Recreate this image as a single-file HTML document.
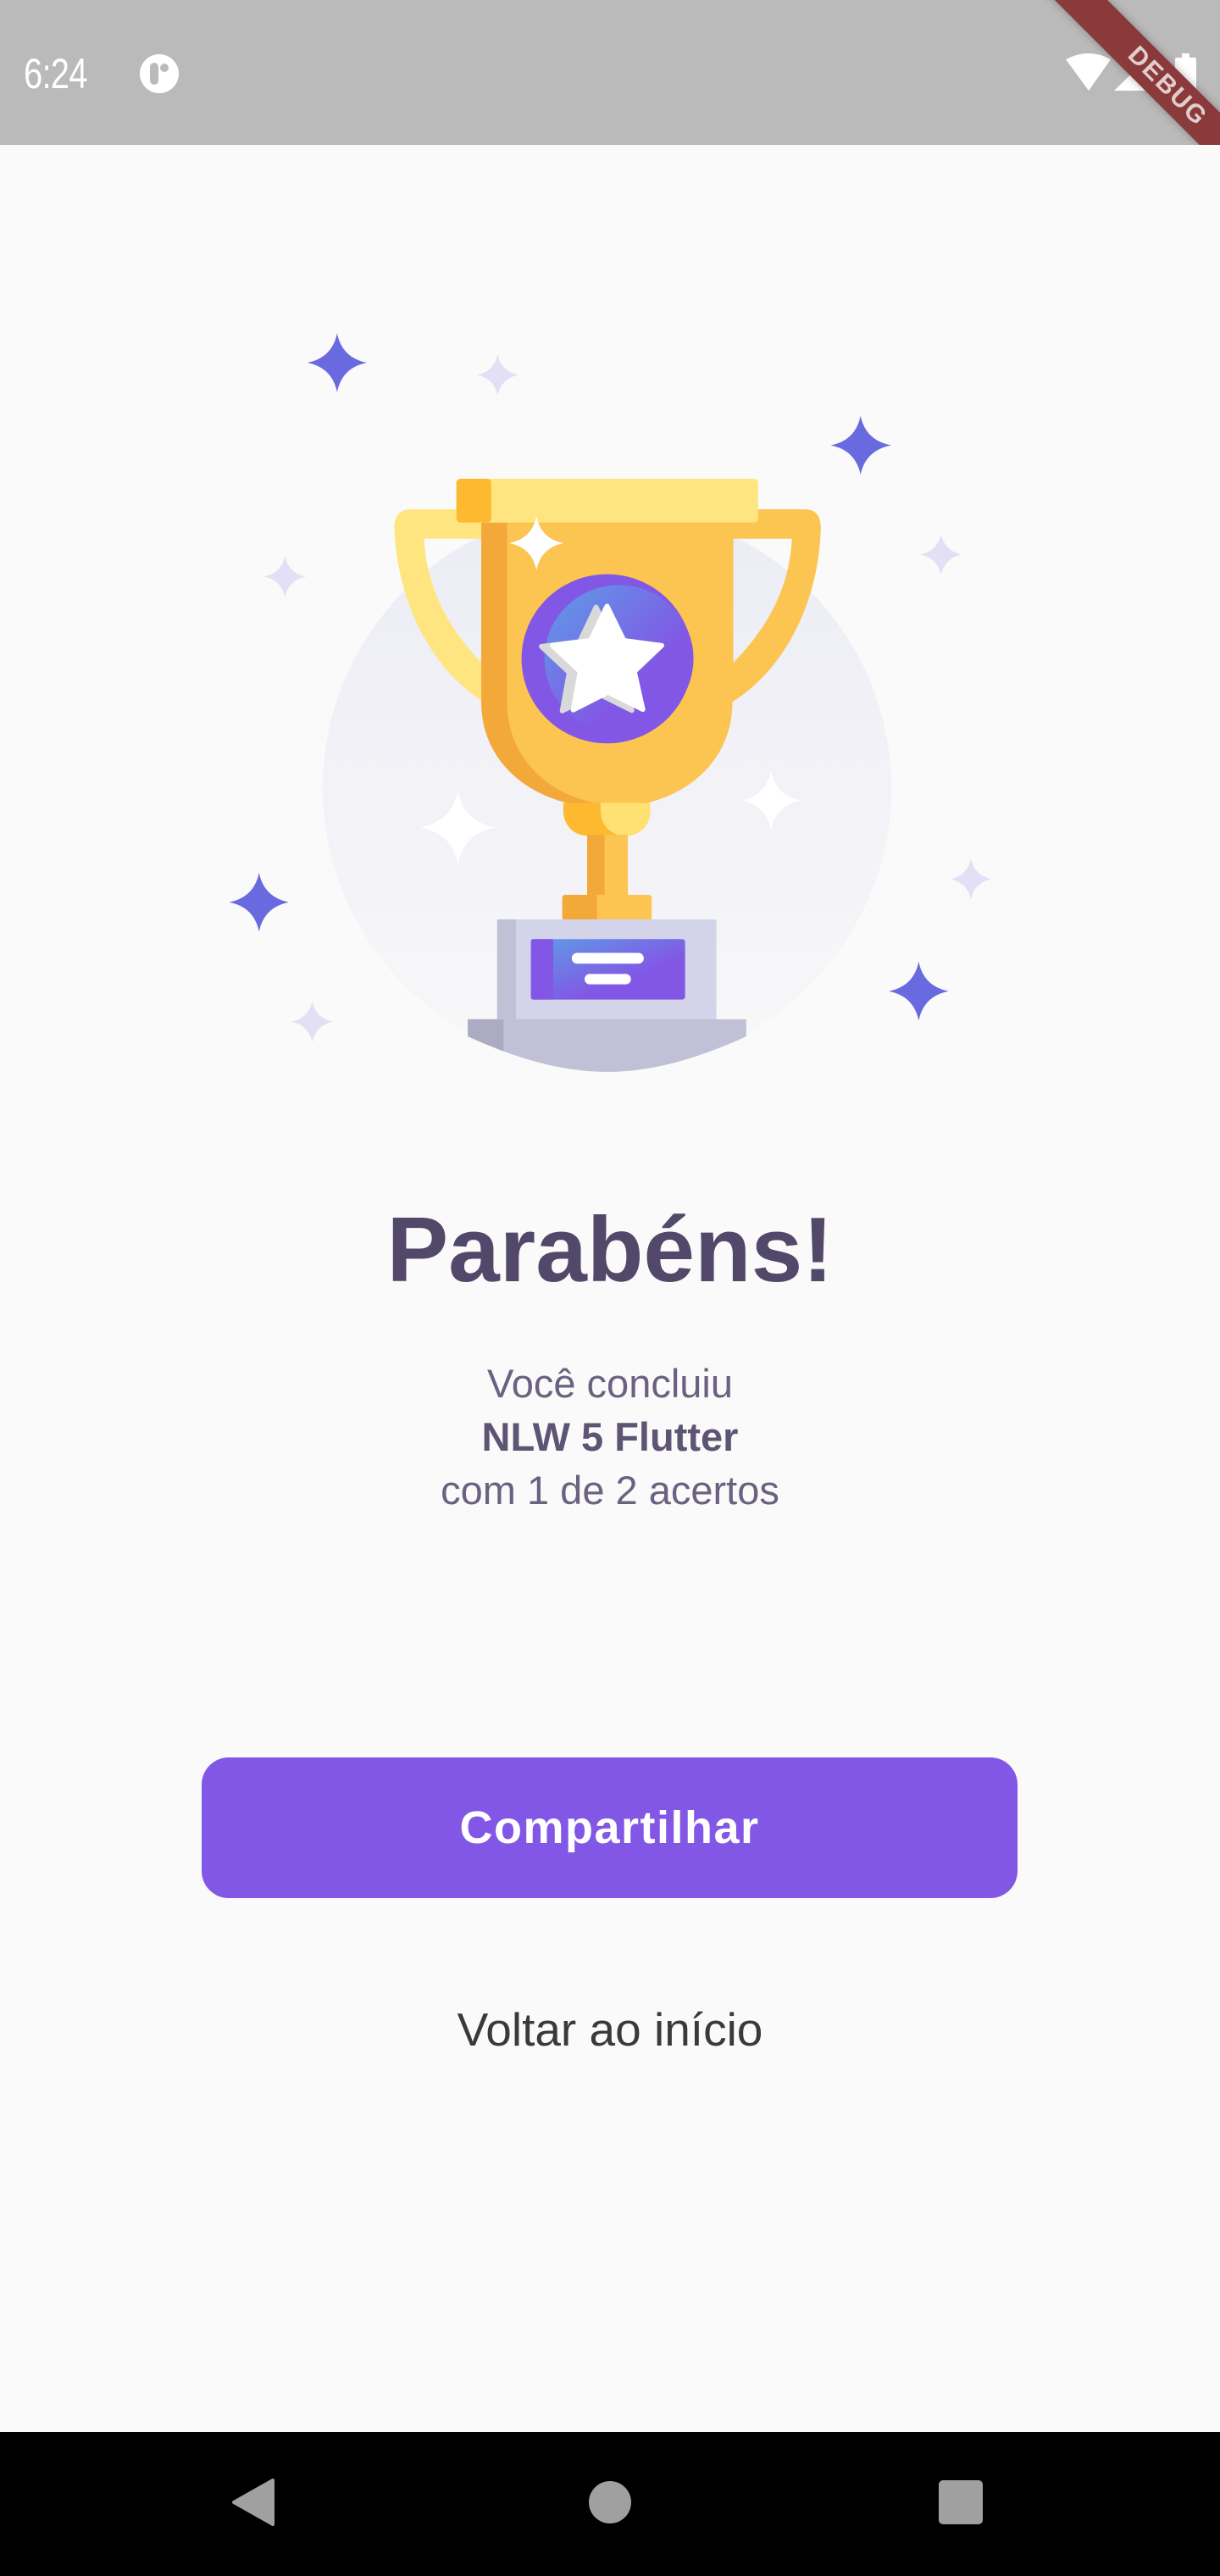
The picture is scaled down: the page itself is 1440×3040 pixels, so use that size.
<!DOCTYPE html>
<html><head><meta charset="utf-8">
<style>
*{margin:0;padding:0;box-sizing:border-box}
html,body{width:1440px;height:3040px;background:#FAFAFA;overflow:hidden;font-family:"Liberation Sans",sans-serif;position:relative}
.status{position:absolute;left:0;top:0;width:1440px;height:171px;background:#BABABA;overflow:hidden}
.time{position:absolute;left:28px;top:58px;color:#fff;font-size:50px;transform:scaleX(0.8);transform-origin:left top;letter-spacing:-1px}
.banner{position:absolute;left:1178px;top:80px;width:400px;height:44px;background:#8A3A3A;transform:rotate(45deg);color:rgba(255,255,255,.75);font-weight:bold;font-size:30px;line-height:44px;text-align:center;letter-spacing:2px;box-shadow:0 0 10px rgba(0,0,0,.3)}
.t{position:absolute;left:0;width:1440px;text-align:center}
.title{top:1410px;font-size:109px;font-weight:bold;color:#52486A;line-height:130px}
.sub{font-size:47px;color:#6B6180;line-height:63px}
.btn{position:absolute;left:238px;top:2074px;width:963px;height:166px;background:#8257E5;border-radius:32px;color:#fff;font-weight:bold;font-size:54px;text-align:center;line-height:166px;letter-spacing:1.5px}
.back{top:2360px;font-size:55px;color:#3A3A3A;line-height:70px}
.nav{position:absolute;left:0;top:2870px;width:1440px;height:170px;background:#000}
</style></head><body>
<div class="status">
<div class="time">6:24</div>
<svg style="position:absolute;left:163px;top:62px" width="50" height="50" viewBox="0 0 50 50"><circle cx="25" cy="25" r="23" fill="#fff"/><rect x="14" y="12" width="10" height="26" rx="5" fill="#BABABA"/><circle cx="31" cy="18" r="5" fill="#BABABA"/></svg>
<svg style="position:absolute;left:1255px;top:62px" width="160" height="48" viewBox="0 0 160 48"><path d="M3 8 Q30 -6 56 8 L30 45 Z" fill="#fff"/><path d="M60 45 L104 2 V45 Z" fill="#fff"/><rect x="132" y="6" width="25" height="40" rx="2" fill="#fff"/><rect x="140" y="1" width="9" height="6" fill="#fff"/></svg>
<div class="banner">DEBUG</div>
</div>

<svg style="position:absolute;left:260px;top:370px" width="920" height="910" viewBox="0 0 1568 1568" preserveAspectRatio="none">
<defs>
<linearGradient id="bg" x1="0" y1="0" x2="0" y2="1"><stop offset="0" stop-color="#ECECF5"/><stop offset="1" stop-color="#F8F8F9"/></linearGradient>
<linearGradient id="pg" x1="0" y1="0" x2="1" y2="1"><stop offset="0" stop-color="#5C9EE6"/><stop offset="0.65" stop-color="#8257E5"/></linearGradient>
</defs>
<circle cx="778" cy="965" r="572" fill="url(#bg)"/>
<path fill-rule="evenodd" fill="#FFE57F" d="M385 398 H530 V790 C420 720 355 580 350 435 Q350 398 385 398 Z M410 458 H525 V710 C460 640 415 560 410 458 Z"/>
<path fill-rule="evenodd" fill="#FCC450" d="M1175 398 H1030 V790 C1140 720 1205 580 1208 435 Q1208 398 1175 398 Z M1150 458 H1032 V710 C1100 640 1145 560 1150 458 Z"/>
<path fill="#F3A93A" d="M525 425 H1030 V790 C1030 920 920 1005 778 1005 C636 1005 525 920 525 790 Z"/>
<path fill="#FCC450" d="M577 425 H1030 V790 C1030 920 920 1000 805 1000 C685 1000 577 920 577 790 Z"/>
<rect x="475" y="336" width="607" height="89" rx="8" fill="#FFE57F"/>
<rect x="475" y="336" width="70" height="89" rx="8" fill="#FDB92F"/>
<circle cx="778" cy="702" r="172" fill="#8257E5"/>
<circle cx="802" cy="702" r="150" fill="url(#pg)"/>
<path fill="#D9D9D9" transform="translate(-22,2)" d="M778 595 L812 665 L888 675 L833 728 L850 805 L780 770 L710 806 L724 728 L668 675 L745 665 Z" stroke="#D9D9D9" stroke-width="10" stroke-linejoin="round"/>
<path fill="#fff" d="M778 595 L812 665 L888 675 L833 728 L850 805 L780 770 L710 806 L724 728 L668 675 L745 665 Z" stroke="#fff" stroke-width="10" stroke-linejoin="round"/>
<path fill="#FDB92F" d="M690 995 H865 V1010 C865 1040 845 1062 815 1062 H740 C710 1062 690 1040 690 1010 Z"/>
<path fill="#FFE072" d="M765 995 H865 V1010 C865 1040 845 1062 815 1062 C785 1062 765 1040 765 1010 Z"/>
<rect x="738" y="1060" width="82" height="125" fill="#FCC450"/>
<rect x="738" y="1060" width="35" height="125" fill="#F3A93A"/>
<rect x="688" y="1182" width="180" height="52" rx="6" fill="#FCC450"/>
<rect x="688" y="1182" width="70" height="52" rx="6" fill="#F3A93A"/>
<rect x="557" y="1232" width="441" height="205" fill="#D3D3EA"/>
<rect x="557" y="1232" width="38" height="205" fill="#C0C0D6"/>
<rect x="625" y="1272" width="310" height="123" rx="6" fill="url(#pg)"/>
<rect x="625" y="1272" width="45" height="123" rx="4" fill="#8257E5"/>
<rect x="707" y="1300" width="145" height="22" rx="11" fill="#fff"/>
<rect x="733" y="1343" width="93" height="21" rx="10" fill="#fff"/>
<path fill="#C0C0D6" d="M498 1435 H1058 V1470 C950 1520 860 1542 778 1542 C696 1542 606 1520 498 1470 Z"/>
<path fill="#ABABC3" d="M498 1435 H570 V1500 C545 1490 520 1480 498 1470 Z"/>
<g fill="#6A6AE0">
<path d="M235 40 Q245 90 295 100 Q245 110 235 160 Q225 110 175 100 Q225 90 235 40Z"/>
<path d="M1288 208 Q1298 258 1350 268 Q1298 278 1288 328 Q1278 278 1228 268 Q1278 258 1288 208Z"/>
<path d="M78 1137 Q88 1187 138 1197 Q88 1207 78 1257 Q68 1207 18 1197 Q68 1187 78 1137Z"/>
<path d="M1405 1318 Q1415 1368 1465 1378 Q1415 1388 1405 1438 Q1395 1388 1345 1378 Q1395 1368 1405 1318Z"/>
</g>
<g fill="#E2E0F5">
<path d="M558 83 Q565 118 600 125 Q565 132 558 167 Q551 132 516 125 Q551 118 558 83Z"/>
<path d="M130 493 Q137 528 172 535 Q137 542 130 577 Q123 542 88 535 Q123 528 130 493Z"/>
<path d="M1450 448 Q1457 483 1492 490 Q1457 497 1450 532 Q1443 497 1408 490 Q1443 483 1450 448Z"/>
<path d="M1510 1108 Q1517 1143 1552 1150 Q1517 1157 1510 1192 Q1503 1157 1468 1150 Q1503 1143 1510 1108Z"/>
<path d="M185 1398 Q192 1433 227 1440 Q192 1447 185 1482 Q178 1447 143 1440 Q178 1433 185 1398Z"/>
</g>
<g fill="#fff">
<path d="M636 412 Q645 458 691 467 Q645 476 636 522 Q627 476 581 467 Q627 458 636 412Z"/>
<path d="M478 970 Q490 1033 553 1045 Q490 1057 478 1120 Q466 1057 403 1045 Q466 1033 478 970Z"/>
<path d="M1108 930 Q1118 980 1168 990 Q1118 1000 1108 1050 Q1098 1000 1048 990 Q1098 980 1108 930Z"/>
</g>
</svg>

<div class="t title">Parabéns!</div>
<div class="t sub" style="top:1601px">Você concluiu</div>
<div class="t sub" style="top:1664px;font-weight:bold;color:#5E5575">NLW 5 Flutter</div>
<div class="t sub" style="top:1727px">com 1 de 2 acertos</div>

<div class="btn">Compartilhar</div>
<div class="t back">Voltar ao início</div>

<div class="nav">
<svg style="position:absolute;left:270px;top:53px" width="60" height="60" viewBox="0 0 60 60"><path d="M52 4 V56 L6 30 Z" fill="#A0A0A0" stroke="#A0A0A0" stroke-width="4" stroke-linejoin="round"/></svg>
<div style="position:absolute;left:695px;top:58px;width:50px;height:50px;border-radius:50%;background:#A0A0A0"></div>
<div style="position:absolute;left:1108px;top:57px;width:52px;height:52px;border-radius:5px;background:#A0A0A0"></div>
</div>
</body></html>
